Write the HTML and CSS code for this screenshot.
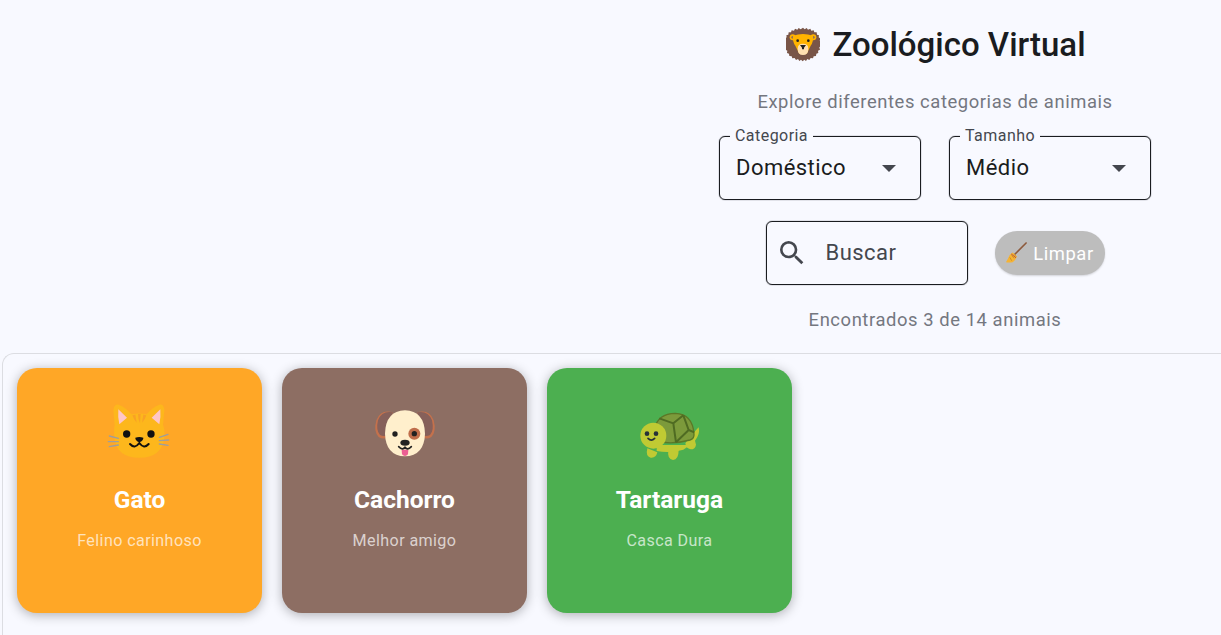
FILE: index.html
```html
<!DOCTYPE html>
<html lang="pt-BR">
<head>
    <meta charset="UTF-8">
    <meta name="viewport" content="width=device-width, initial-scale=1.0">
    <title>Zoológico Virtual</title>
    <link rel="stylesheet" href="styles.css">
</head>
<body>
    <header class="top">
        <div class="top-inner">
            <h1 class="title">
                <svg class="lion" viewBox="24 24 102 104" aria-hidden="true">
                    <path fill="#795548" d="M75 24l5 5 6-4 4 5 7-3 3 6 7-1 2 6 7 0 1 7 6 2-1 6 6 4-3 6 5 5-4 5 3 6-5 4 2 7-6 3 1 7-6 2-1 7-7 1-2 6-7-1-4 6-6-3-4 6-5-4-5 5-5-5-5 4-4-6-6 3-4-6-7 1-2-6-7-1-1-7-6-2 1-7-6-3 2-7-5-4 3-6-4-5 5-5-3-6 6-4-1-6 6-2 1-7 7 0 2-6 7 1 3-6 7 3 4-5 6 4z"/>
                    <circle cx="44" cy="53" r="9" fill="#ffb300"/>
                    <circle cx="106" cy="53" r="9" fill="#ffb300"/>
                    <circle cx="44" cy="53" r="4" fill="#8d6e63"/>
                    <circle cx="106" cy="53" r="4" fill="#8d6e63"/>
                    <path fill="#ffb300" d="M45 48q30-10 60 0 2 18-7 30l-12 24H64L52 78q-9-12-7-30z"/>
                    <path fill="#ffe0b2" d="M75 72q-16 0-16 15 0 19 16 19t16-19q0-15-16-15z"/>
                    <circle cx="59" cy="63" r="4" fill="#212121"/>
                    <circle cx="91" cy="63" r="4" fill="#212121"/>
                    <path fill="#212121" d="M66 76h18l-6 8v5h-6v-5z"/>
                </svg>
                <span>Zoológico Virtual</span>
            </h1>
            <p class="subtitle">Explore diferentes categorias de animais</p>

            <div class="filters">
                <div class="field">
                    <span class="field-label">Categoria</span>
                    <span class="field-value">Doméstico</span>
                    <span class="arrow"></span>
                </div>
                <div class="field">
                    <span class="field-label">Tamanho</span>
                    <span class="field-value">Médio</span>
                    <span class="arrow"></span>
                </div>
            </div>

            <div class="search-row">
                <div class="field search">
                    <svg class="search-icon" viewBox="0 0 24 24" aria-hidden="true">
                        <path fill="#44474e" d="M15.5 14h-.79l-.28-.27A6.47 6.47 0 0 0 16 9.5 6.5 6.5 0 1 0 9.5 16c1.61 0 3.09-.59 4.23-1.57l.27.28v.79l5 4.99L20.49 19l-4.99-5zm-6 0C7.01 14 5 11.99 5 9.5S7.01 5 9.5 5 14 7.01 14 9.5 11.99 14 9.5 14z"/>
                    </svg>
                    <span class="search-text">Buscar</span>
                </div>
                <button class="clear-btn" type="button">
                    <svg class="broom" viewBox="0 0 24 24" aria-hidden="true">
                        <path stroke="#8d5a3c" stroke-width="1.7" stroke-linecap="round" d="M22 1L10 13"/>
                        <path fill="#f5b335" d="M8 11l4.500 4q-1.500 4-4.500 6-4 1-7 0 2-3 3-5.500 1-3 4-4.500z"/>
                        <path stroke="#c98a1e" stroke-width=".9" fill="none" d="M7 14l2.500 3M5 16l2 3.500M9.500 13l2 2"/>
                        <path stroke="#b5533c" stroke-width="1" d="M6.500 12.500l5 4"/>
                    </svg>
                    <span>Limpar</span>
                </button>
            </div>

            <p class="count">Encontrados 3 de 14 animais</p>
        </div>
    </header>

    <section class="panel">
        <article class="card card-orange">
            <svg class="pic" width="80" height="75" viewBox="0 0 240 225" aria-hidden="true">
                <path fill="#fdb71c" d="M44 90L40 46q2-20 16-17 24 10 38 29 24-5 46 0 14-19 38-29 14-3 15 17l-4 44q6 14 4 38-8 60-75 60-68 0-75-60-2-24 1-38z"/>
                <path fill="#ffc6c6" d="M55 43l26 25-23 20q-5-24-3-45zM181 43l-26 25 23 20q5-24 3-45z"/>
                <path fill="#f9a126" d="M97 61l9-2 4 24q-8-8-13-22zM114 57h8l-2 28q-6-12-6-28zM130 59l9 2q-4 14-13 22z"/>
                <circle cx="80" cy="117" r="11" fill="#111"/>
                <circle cx="153" cy="117" r="11" fill="#111"/>
                <path fill="#111" d="M106 128q12-4 24 0 1 8-12 14-13-6-12-14z"/>
                <path fill="none" stroke="#111" stroke-width="6" stroke-linecap="round" d="M90 147q14 16 28-3 14 19 28 3"/>
                <path fill="none" stroke="#9e9e9e" stroke-width="4" stroke-linecap="round" d="M28 123l27 7M25 140h30M28 155l27-5M204 118l-26 9M206 135l-28 2M204 151l-26-4"/>
            </svg>
            <h2 class="card-title">Gato</h2>
            <p class="card-text">Felino carinhoso</p>
        </article>

        <article class="card card-brown">
            <svg class="pic" width="110" height="75" viewBox="0 0 330 225" aria-hidden="true">
                <path fill="#c4714c" d="M128 52Q92 42 79 76q-9 34 7 50 14 9 28 0zM202 52q36-10 49 24 9 34-7 50-14 9-28 0z"/>
                <path fill="#86605a" d="M128 52Q96 46 84 76q-7 30 6 44 12 6 24 0zM202 52q32-6 44 24 7 30-6 44-12 6-24 0z"/>
                <path fill="#ffefcc" d="M165 46q-58 2-60 70 2 66 60 68 58-2 60-68-2-68-60-70z"/>
                <circle cx="193" cy="116" r="18" fill="#bf6d4a"/>
                <circle cx="193" cy="116" r="8" fill="#212121"/>
                <circle cx="135" cy="117" r="8" fill="#212121"/>
                <ellipse cx="165" cy="143" rx="14" ry="9" fill="#212121"/>
                <path fill="#ec5f93" d="M155 164h20l-1 14q-9 10-18 0z"/>
                <path fill="none" stroke="#212121" stroke-width="5" stroke-linecap="round" d="M146 155q12 12 19 2 7 10 19-2"/>
            </svg>
            <h2 class="card-title">Cachorro</h2>
            <p class="card-text">Melhor amigo</p>
        </article>

        <article class="card card-green">
            <svg class="pic" width="100" height="75" viewBox="0 0 300 225" aria-hidden="true">
                <path fill="#c0ca33" d="M212 122l24-25q5 20-11 40l3 12q-2 14-16 14-14-2-16-18zM82 160q-6 24 10 28 16 2 20-16zM145 165q-4 28 14 30 17-1 17-30z"/>
                <path fill="#c0ca33" d="M110 150h100l-20 14q-40 12-80 4z"/>
                <path fill="#7c9a3b" stroke="#5b7826" stroke-width="4" d="M104 100q10-44 62-45 52 2 56 62 1 14-12 18-50 14-92 5-28-20-14-40z"/>
                <path fill="none" stroke="#4f6b22" stroke-width="6" stroke-linejoin="round" d="M118 70l42 15 30-24M160 85l8 57M190 61l16 44-38 37M206 105l17 7"/>
                <circle cx="100" cy="122" r="39" fill="#c0ca33"/>
                <circle cx="81" cy="116" r="7" fill="#263238"/>
                <circle cx="108" cy="116" r="7" fill="#263238"/>
                <path fill="none" stroke="#263238" stroke-width="5" stroke-linecap="round" d="M84 130q10 10 20 0"/>
            </svg>
            <h2 class="card-title">Tartaruga</h2>
            <p class="card-text">Casca Dura</p>
        </article>
    </section>
</body>
</html>
```

FILE: styles.css
```css
* {
    box-sizing: border-box;
}

html, body {
    height: 100%;
}

body {
    margin: 0;
    padding: 0;
    background-color: #f8f9ff;
    font-family: Roboto, "Liberation Sans", sans-serif;
    color: #1a1c20;
    overflow: hidden;
    display: flex;
    flex-direction: column;
}

.top {
    display: flex;
    justify-content: flex-end;
}

.top-inner {
    width: 572px;
    display: flex;
    flex-direction: column;
    align-items: center;
    padding-top: 27px;
}

.title {
    margin: 0;
    padding-left: 2px;
    display: flex;
    align-items: center;
    gap: 12px;
    font-size: 33px;
    line-height: 36px;
    font-weight: 500;
}

.lion {
    width: 34px;
    height: 36px;
}

.subtitle {
    margin: 27px 0 0;
    font-size: 18.4px;
    line-height: 24px;
    letter-spacing: 0.575px;
    color: #74777f;
}

.filters {
    display: flex;
    gap: 28px;
    margin-top: 22px;
}

.field {
    position: relative;
    width: 202px;
    height: 64px;
    padding: 0 16px 2px;
    display: flex;
    align-items: center;
    border: 1px solid #1a1c20;
    border-radius: 6px;
    box-shadow: 0 0 1px #1a1c20;
    font-size: 22px;
    letter-spacing: 0.45px;
}

.field-label {
    position: absolute;
    top: -10px;
    left: 10px;
    padding: 0 5px;
    background-color: #f8f9ff;
    font-size: 16px;
    line-height: 18px;
    color: #44474e;
}

.field-value {
    flex: 1;
}

.arrow {
    width: 0;
    height: 0;
    margin: 2px 8px 0 0;
    border-left: 7px solid transparent;
    border-right: 7px solid transparent;
    border-top: 7px solid #44474e;
}

.search-row {
    display: flex;
    align-items: center;
    gap: 27px;
    margin-top: 21px;
}

.search {
    padding: 0 9px 2px;
    gap: 18px;
    color: #44474e;
}

.search-icon {
    width: 32px;
    height: 32px;
    margin-top: 2px;
}

.clear-btn {
    width: 110px;
    height: 44px;
    padding: 0;
    display: flex;
    align-items: center;
    justify-content: center;
    gap: 5px;
    border: none;
    border-radius: 22px;
    background-color: #bdbdbd;
    color: #fff;
    font-family: inherit;
    font-size: 18.4px;
    letter-spacing: 0.575px;
    box-shadow: 0 1px 2px rgba(0, 0, 0, 0.15);
}

.broom {
    width: 23px;
    height: 23px;
}

.count {
    margin: 23px 0 0;
    font-size: 18.4px;
    line-height: 24px;
    letter-spacing: 0.575px;
    color: #74777f;
}

.panel {
    flex: 1;
    margin: 21px 0 0 2px;
    padding: 14px;
    display: flex;
    align-items: flex-start;
    gap: 20px;
    border-top: 1px solid #dcdde2;
    border-left: 1px solid #dcdde2;
    border-top-left-radius: 12px;
}

.card {
    width: 245px;
    height: 245px;
    padding-top: 27px;
    display: flex;
    flex-direction: column;
    align-items: center;
    border-radius: 20px;
    box-shadow: 0 2px 12px rgba(0, 0, 0, 0.3);
    color: #fff;
}

.card-orange {
    background-color: #ffa726;
}

.card-brown {
    background-color: #8d6e63;
}

.card-green {
    background-color: #4caf50;
}

.pic {
    display: block;
}

.card-title {
    margin: 14px 0 0;
    font-size: 24.5px;
    line-height: 32px;
    font-weight: 700;
}

.card-text {
    margin: 15px 0 0;
    font-size: 16.1px;
    line-height: 20px;
    letter-spacing: 0.4px;
    color: rgba(255, 255, 255, 0.7);
}
```
